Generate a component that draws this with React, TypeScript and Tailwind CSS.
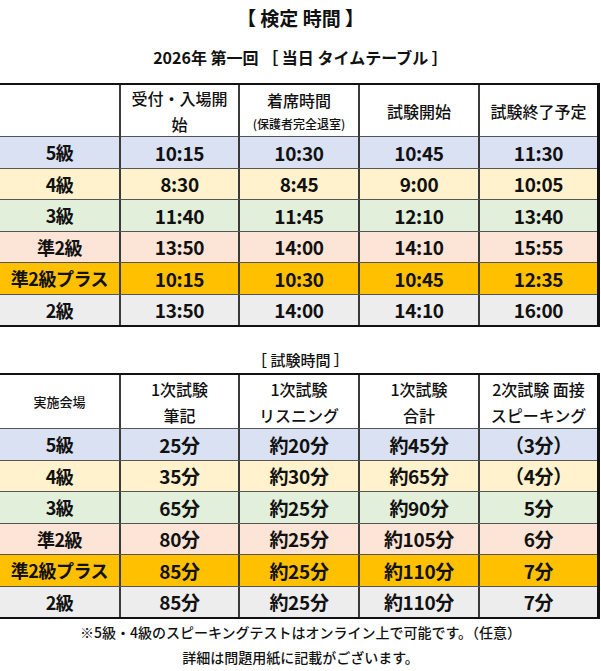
import React from 'react';

type Row = { label: string; cells: string[]; bg: string };

const timeRows: Row[] = [
  { label: '5級', cells: ['10:15', '10:30', '10:45', '11:30'], bg: 'bg-[#d9e1f2]' },
  { label: '4級', cells: ['8:30', '8:45', '9:00', '10:05'], bg: 'bg-[#fff2cc]' },
  { label: '3級', cells: ['11:40', '11:45', '12:10', '13:40'], bg: 'bg-[#e2efda]' },
  { label: '準2級', cells: ['13:50', '14:00', '14:10', '15:55'], bg: 'bg-[#fce4d6]' },
  { label: '準2級プラス', cells: ['10:15', '10:30', '10:45', '12:35'], bg: 'bg-[#ffc000]' },
  { label: '2級', cells: ['13:50', '14:00', '14:10', '16:00'], bg: 'bg-[#ededed]' },
];

const durationRows: Row[] = [
  { label: '5級', cells: ['25分', '約20分', '約45分', '（3分）'], bg: 'bg-[#d9e1f2]' },
  { label: '4級', cells: ['35分', '約30分', '約65分', '（4分）'], bg: 'bg-[#fff2cc]' },
  { label: '3級', cells: ['65分', '約25分', '約90分', '5分'], bg: 'bg-[#e2efda]' },
  { label: '準2級', cells: ['80分', '約25分', '約105分', '6分'], bg: 'bg-[#fce4d6]' },
  { label: '準2級プラス', cells: ['85分', '約25分', '約110分', '7分'], bg: 'bg-[#ffc000]' },
  { label: '2級', cells: ['85分', '約25分', '約110分', '7分'], bg: 'bg-[#ededed]' },
];

const font = "font-['Noto_Sans_CJK_JP','Noto_Sans',sans-serif]";

// colored body rows, shared by both tables
const BodyRows = ({ rows }: { rows: Row[] }) => (
  <>
    {rows.map((r) => (
      <div key={r.label} className={`grid grid-cols-[119px_119px_120px_120px_1fr] h-[31.5px] border-t border-[#555] ${r.bg}`}>
        <div className="flex items-center justify-center text-[18px] font-bold leading-none tracking-[-0.5px]">{r.label}</div>
        {r.cells.map((c, i) => (
          <div key={i} className="flex items-center justify-center border-l-2 border-[#3a3a3a] text-[19px] font-bold leading-none tracking-[-0.3px]">
            {c}
          </div>
        ))}
      </div>
    ))}
  </>
);

const HeadCell = ({ children, first }: { children: React.ReactNode; first?: boolean }) => (
  <div className={`flex flex-col items-center justify-center text-center text-[16px] font-medium leading-[26px] ${first ? '' : 'border-l-2 border-[#3a3a3a]'}`}>
    {children}
  </div>
);

export default function App() {
  return (
    <div className={`w-[601px] h-[671px] bg-white text-[#111] ${font}`}>
      <div className="h-[37px] flex items-center justify-center text-[19px] font-bold">【 検定 時間 】</div>
      <div className="h-[40px] flex items-center justify-center text-[16px] font-bold">2026年 第一回 ［ 当日 タイムテーブル ］</div>
      <div className="h-[6px]" />

      <div className="w-[600px] border-t-2 border-r-[3px] border-b-2 border-[#111]">
        <div className="grid grid-cols-[119px_119px_120px_120px_1fr] h-[51px] bg-white">
          <HeadCell first>{''}</HeadCell>
          <HeadCell>
            <span>受付・入場開</span>
            <span>始</span>
          </HeadCell>
          <HeadCell>
            <span>着席時間</span>
            <span className="text-[12px] leading-[22px]">(保護者完全退室)</span>
          </HeadCell>
          <HeadCell>試験開始</HeadCell>
          <HeadCell>試験終了予定</HeadCell>
        </div>
        <BodyRows rows={timeRows} />
      </div>

      <div className="h-[46px] flex items-end justify-center text-[15px] font-medium pb-[2px]">［ 試験時間 ］</div>

      <div className="w-[600px] border-t-2 border-r-[3px] border-b-2 border-[#111]">
        <div className="grid grid-cols-[119px_119px_120px_120px_1fr] h-[53px] bg-white">
          <HeadCell first>
            <span className="text-[13px]">実施会場</span>
          </HeadCell>
          <HeadCell>
            <span>1次試験</span>
            <span>筆記</span>
          </HeadCell>
          <HeadCell>
            <span>1次試験</span>
            <span>リスニング</span>
          </HeadCell>
          <HeadCell>
            <span>1次試験</span>
            <span>合計</span>
          </HeadCell>
          <HeadCell>
            <span>2次試験 面接</span>
            <span>スピーキング</span>
          </HeadCell>
        </div>
        <BodyRows rows={durationRows} />
      </div>

      <div className="pt-[1px] flex flex-col items-center text-[14px] font-medium leading-[25px]">
        <span>※5級・4級のスピーキングテストはオンライン上で可能です。（任意）</span>
        <span>詳細は問題用紙に記載がございます。</span>
      </div>
    </div>
  );
}
